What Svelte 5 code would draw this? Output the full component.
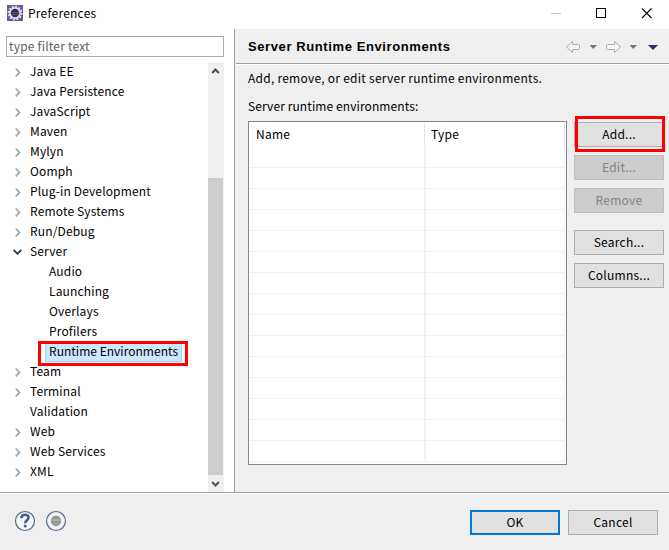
<script>
  const tree = [
    ['Java EE', 1], ['Java Persistence', 1], ['JavaScript', 1], ['Maven', 1], ['Mylyn', 1],
    ['Oomph', 1], ['Plug-in Development', 1], ['Remote Systems', 1], ['Run/Debug', 1],
    ['Server', 2], ['Audio', 3], ['Launching', 3], ['Overlays', 3], ['Profilers', 3],
    ['Runtime Environments', 4], ['Team', 1], ['Terminal', 1], ['Validation', 0],
    ['Web', 1], ['Web Services', 1], ['XML', 1]
  ];
  const rows = Array.from({ length: 15 }, (_, i) => i);
</script>

<div class="window">
  <header class="titlebar">
    <svg class="logo" width="16" height="16" viewBox="0 0 16 16">
      <rect width="16" height="16" fill="#6b5599" />
      <circle cx="8" cy="8" r="6.6" fill="none" stroke="#e4dfe9" stroke-width="1.8" stroke-dasharray="1.9 1.556" />
      <circle cx="8" cy="8" r="5.1" fill="#352c59" stroke="#e9e6eb" stroke-width="1.7" />
      <path d="M3.8 7.500h8.400M4 9.500h8" stroke="#575080" />
    </svg>
    <span class="title">Preferences</span>
    <svg class="controls" width="110" height="29" viewBox="0 0 110 29">
      <path d="M0 13.500h10" stroke="#c5c5c5" />
      <rect x="45.500" y="8.500" width="9" height="9" fill="none" stroke="#000" />
      <path d="M91 8.500l9.500 9.500M100.500 8.500l-9.500 9.500" stroke="#000" stroke-width="1.1" />
    </svg>
  </header>

  <main>
    <aside>
      <div class="filter">type filter text</div>
      <div class="treewrap">
        <ul>
          {#each tree as [name, kind]}
            <li class:child={kind > 2} class:selected={kind === 4}>
              {#if kind < 3}
                <svg class="twist" width="12" height="12" viewBox="0 0 12 12">
                  {#if kind === 1}<path d="M3.800 2.500l3.700 3.900-3.700 3.900" fill="none" stroke="#a6a6a6" stroke-width="1.800" />{/if}
                  {#if kind === 2}<path d="M1.600 4l3.900 3.700L9.400 4" fill="none" stroke="#404040" stroke-width="1.900" />{/if}
                </svg>
              {/if}
              <span class="name">{name}</span>
            </li>
          {/each}
        </ul>
        <div class="scroll">
          <svg width="16" height="17" viewBox="0 0 16 17"><path d="M4.200 11l3.300-3.500L10.800 11" fill="none" stroke="#505050" stroke-width="2" /></svg>
          <div class="thumb"></div>
          <svg width="16" height="17" viewBox="0 0 16 17"><path d="M4.200 7l3.300 3.500L10.800 7" fill="none" stroke="#505050" stroke-width="2" /></svg>
        </div>
      </div>
    </aside>

    <section>
      <div class="heading">
        <h1>Server Runtime Environments</h1>
        <svg width="94" height="14" viewBox="0 0 94 14">
          <g fill="#f6f6f6" stroke="#adadad">
            <path d="M1.500 7l6-5.500v3h6a1 1 0 0 1 1 1v3a1 1 0 0 1-1 1h-6v3z" />
            <path d="M55.500 7l-6-5.500v3h-7a1 1 0 0 0-1 1v3a1 1 0 0 0 1 1h7v3z" />
          </g>
          <path d="M24.500 5H32l-3.800 4zM64.500 5H72l-3.800 4z" fill="#777" />
          <path d="M83 5h10l-5 5z" fill="#3c2860" />
        </svg>
      </div>
      <div class="content">
        <p class="desc">Add, remove, or edit server runtime environments.</p>
        <p class="caption">Server runtime environments:</p>
        <div class="body">
          <div class="table">
            <div class="thead"><span class="c1">Name</span><span class="c2">Type</span></div>
            {#each rows as row (row)}
              <div class="row"><span class="c1"></span><span class="c2"></span></div>
            {/each}
          </div>
          <div class="actions">
            <button class="add">Add...</button>
            <button disabled>Edit...</button>
            <button disabled>Remove</button>
            <button class="search">Search...</button>
            <button>Columns...</button>
          </div>
        </div>
      </div>
    </section>
  </main>

  <footer>
    <svg width="54" height="22" viewBox="0 0 54 22">
      <defs>
        <linearGradient id="ball" x2="0" y2="1"><stop stop-color="#858585" /><stop offset=".5" stop-color="#b8b8b8" /><stop offset=".52" stop-color="#929292" /><stop offset="1" stop-color="#aaa" /></linearGradient>
      </defs>
      <circle cx="11" cy="11" r="9.500" fill="#f4f5f7" stroke="#566a8e" stroke-width="1.200" />
      <path d="M7.400 8.200C7.400 3.700 14.600 3.700 14.600 7.600C14.600 10.300 11.200 10 11.200 13.300" fill="none" stroke="#46608e" stroke-width="2.600" />
      <circle cx="11.200" cy="16" r="1.500" fill="#46608e" />
      <circle cx="42" cy="11" r="9.500" fill="#f1f2f3" stroke="#566a8e" stroke-width="1.200" />
      <circle cx="42" cy="11" r="4.700" fill="url(#ball)" stroke="#777" stroke-width=".8" />
    </svg>
    <div class="confirm">
      <button class="ok">OK</button>
      <button>Cancel</button>
    </div>
  </footer>
</div>

<style>
  :global(body) { margin: 0; }
  * { box-sizing: border-box; }
  .window {
    width: 669px; height: 550px; display: flex; flex-direction: column;
    background: #efefef; color: #000; overflow: hidden;
    font: 12px/20px "Noto Sans CJK SC", "Noto Sans", sans-serif;
    letter-spacing: .25px;
  }
  .titlebar { height: 29px; flex: none; display: flex; align-items: flex-start; background: #fff; padding-left: 7px; }
  .logo { margin-top: 5px; }
  .title { margin: 3px auto 0 5px; letter-spacing: .24px; }
  .controls { margin-right: 8px; }
  main { height: 465px; flex: none; display: flex; border-bottom: 1px solid #fff; box-shadow: inset 0 -1px #a0a0a0; }
  aside { width: 235px; height: 463px; flex: none; background: #fff; border-right: 1px solid #a0a0a0; padding: 7px 10px 0 6px; }
  .filter { width: 218px; height: 21px; border: 1px solid #abadb3; color: #606060; padding: 0 2px; line-height: 18px; letter-spacing: .2px; }
  .treewrap { display: flex; justify-content: space-between; margin: 5px 0 0 -6px; width: 224px; height: 430px; }
  ul { list-style: none; margin: 0; padding: 0; width: 208px; letter-spacing: .15px; }
  li { display: flex; align-items: center; height: 20px; padding-left: 12px; white-space: nowrap; }
  li.child { padding-left: 49px; }
  .name { height: 20px; line-height: 18px; }
  .twist { margin-right: 6px; flex: none; }
  li.selected { position: relative; padding-left: 45px; letter-spacing: .02px; }
  .selected .name { line-height: 16px; width: 137px; padding-left: 3px; border: 1px solid #99d1ff; background: #cce8ff; }
  .selected::after { content: ""; position: absolute; left: 38px; top: -1px; width: 144px; height: 19px; border: 3px solid #f00; }
  .scroll { width: 16px; background: #f0f0f0; display: flex; flex-direction: column; }
  .scroll svg { display: block; flex: none; }
  .thumb { width: 15px; height: 297px; margin-top: auto; background: #cdcdcd; }
  section { flex: 1; margin-left: 1px; }
  .heading { height: 36px; border-bottom: 1px solid #fff; box-shadow: inset 0 -1px #a0a0a0; display: flex; justify-content: space-between; align-items: center; padding: 0 10px 0 12px; }
  h1 { margin: 1px 0 0; font: bold 13px/20px "Liberation Sans", sans-serif; letter-spacing: .6px; white-space: nowrap; }
  .content { padding: 3px 5px 0 12px; }
  p { margin: 0; height: 20px; }
  .caption { margin-top: 8px; letter-spacing: .1px; }
  .body { display: flex; gap: 7px; margin-top: 5px; }
  .table { width: 319px; height: 344px; border: 1px solid #828790; background: #fff; padding: 1px; overflow: hidden; }
  .thead, .row { display: flex; }
  .thead { height: 24px; line-height: 22px; }
  .thead .c1 { width: 175px; border-right: 1px solid #e5e5e5; padding-left: 6px; }
  .thead .c2 { width: 140px; border-right: 1px solid #e5e5e5; padding-left: 6px; }
  .row { height: 21px; border-bottom: 1px solid #f0f0f0; }
  .row .c1 { width: 176px; border-right: 2px solid #edf3fa; }
  .row .c2 { width: 139px; border-right: 1px solid #edf3fa; }
  .actions { display: flex; flex-direction: column; gap: 8px; padding-top: 1px; }
  button { width: 90px; height: 25px; flex: none; border: 1px solid #adadad; background: #e1e1e1; color: #000; padding: 0 0 1px; font: inherit; letter-spacing: inherit; line-height: 20px; }
  button:disabled { background: #ccc; border-color: #bfbfbf; color: #838383; }
  .add { position: relative; }
  .add::after { content: ""; position: absolute; left: 0; top: -7px; width: 84px; height: 30px; border: 3px solid #f00; }
  .search { margin-top: 9px; }
  footer { flex: 1; display: flex; align-items: center; justify-content: space-between; padding: 0 11px 0 14px; }
  footer svg { margin-bottom: 3px; }
  .confirm { display: flex; gap: 8px; }
  .ok { border: 2px solid #0078d7; line-height: 18px; }
</style>
